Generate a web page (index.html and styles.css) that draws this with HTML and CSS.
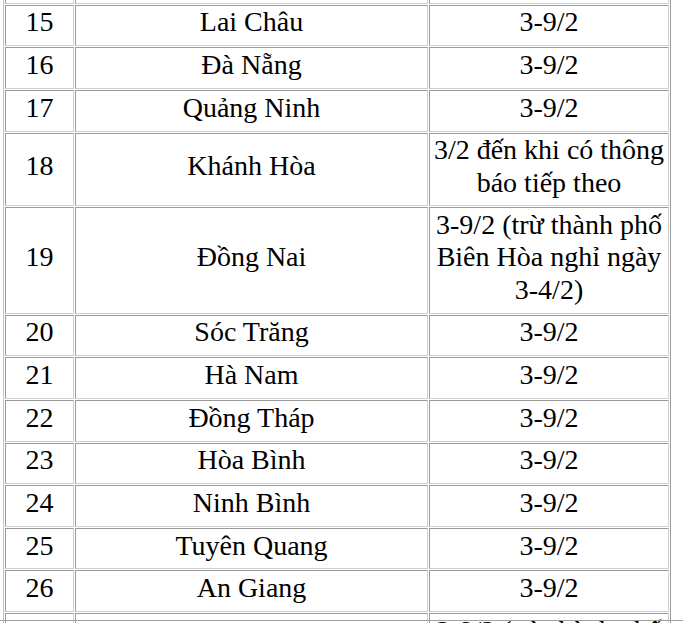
FILE: index.html
```html
<!DOCTYPE html>
<html lang="vi">
<head>
<meta charset="utf-8">
<title>Lịch nghỉ</title>
<link rel="stylesheet" href="styles.css">
</head>
<body>
<table class="grid">
  <colgroup>
    <col class="c-num">
    <col class="c-name">
    <col class="c-date">
  </colgroup>
  <tbody>
    <tr><td>&nbsp;</td><td>&nbsp;</td><td>&nbsp;</td></tr>
    <tr><td>15</td><td>Lai Châu</td><td>3-9/2</td></tr>
    <tr><td>16</td><td>Đà Nẵng</td><td>3-9/2</td></tr>
    <tr><td>17</td><td>Quảng Ninh</td><td>3-9/2</td></tr>
    <tr><td>18</td><td>Khánh Hòa</td><td>3/2 đến khi có thông báo tiếp theo</td></tr>
    <tr><td>19</td><td>Đồng Nai</td><td>3-9/2 (trừ thành phố Biên Hòa nghỉ ngày 3-4/2)</td></tr>
    <tr><td>20</td><td>Sóc Trăng</td><td>3-9/2</td></tr>
    <tr><td>21</td><td>Hà Nam</td><td>3-9/2</td></tr>
    <tr><td>22</td><td>Đồng Tháp</td><td>3-9/2</td></tr>
    <tr><td>23</td><td>Hòa Bình</td><td>3-9/2</td></tr>
    <tr><td>24</td><td>Ninh Bình</td><td>3-9/2</td></tr>
    <tr><td>25</td><td>Tuyên Quang</td><td>3-9/2</td></tr>
    <tr><td>26</td><td>An Giang</td><td>3-9/2</td></tr>
    <tr><td>27</td><td>Quảng Nam</td><td class="top">3-9/2 (trừ thành phố Hội An nghỉ đến khi có thông báo tiếp theo)</td></tr>
  </tbody>
</table>
<div class="edge"></div>
</body>
</html>
```
FILE: styles.css
```css
html, body {
  margin: 0;
  padding: 0;
  background: #ffffff;
  overflow: hidden;
}

body {
  font-family: "Liberation Serif", Tinos, "Times New Roman", "DejaVu Serif", serif;
  font-size: 28px;
  color: #000;
}

.grid {
  margin: -40px 0 0 3px;
  width: 668px;
  table-layout: fixed;
  border-collapse: separate;
  border-spacing: 1px;
  border: 1px solid;
  border-color: #c4c4c4 #9a9a9a #9a9a9a #c4c4c4;
}

.c-num { width: 69px; }
.c-name { width: 353px; }
.c-date { width: 240px; }

.grid td {
  box-sizing: border-box;
  border: 1px solid;
  border-color: #9a9a9a #d0d0d0 #d0d0d0 #9a9a9a;
  padding: 0.7px 1px 6.77px;
  text-align: center;
  vertical-align: middle;
  line-height: 32.2px;
}

.grid td.top {
  vertical-align: top;
}

.edge {
  position: fixed;
  left: 0;
  right: 0;
  top: 620px;
  height: 1px;
  background: #a0a0a0;
}
```
